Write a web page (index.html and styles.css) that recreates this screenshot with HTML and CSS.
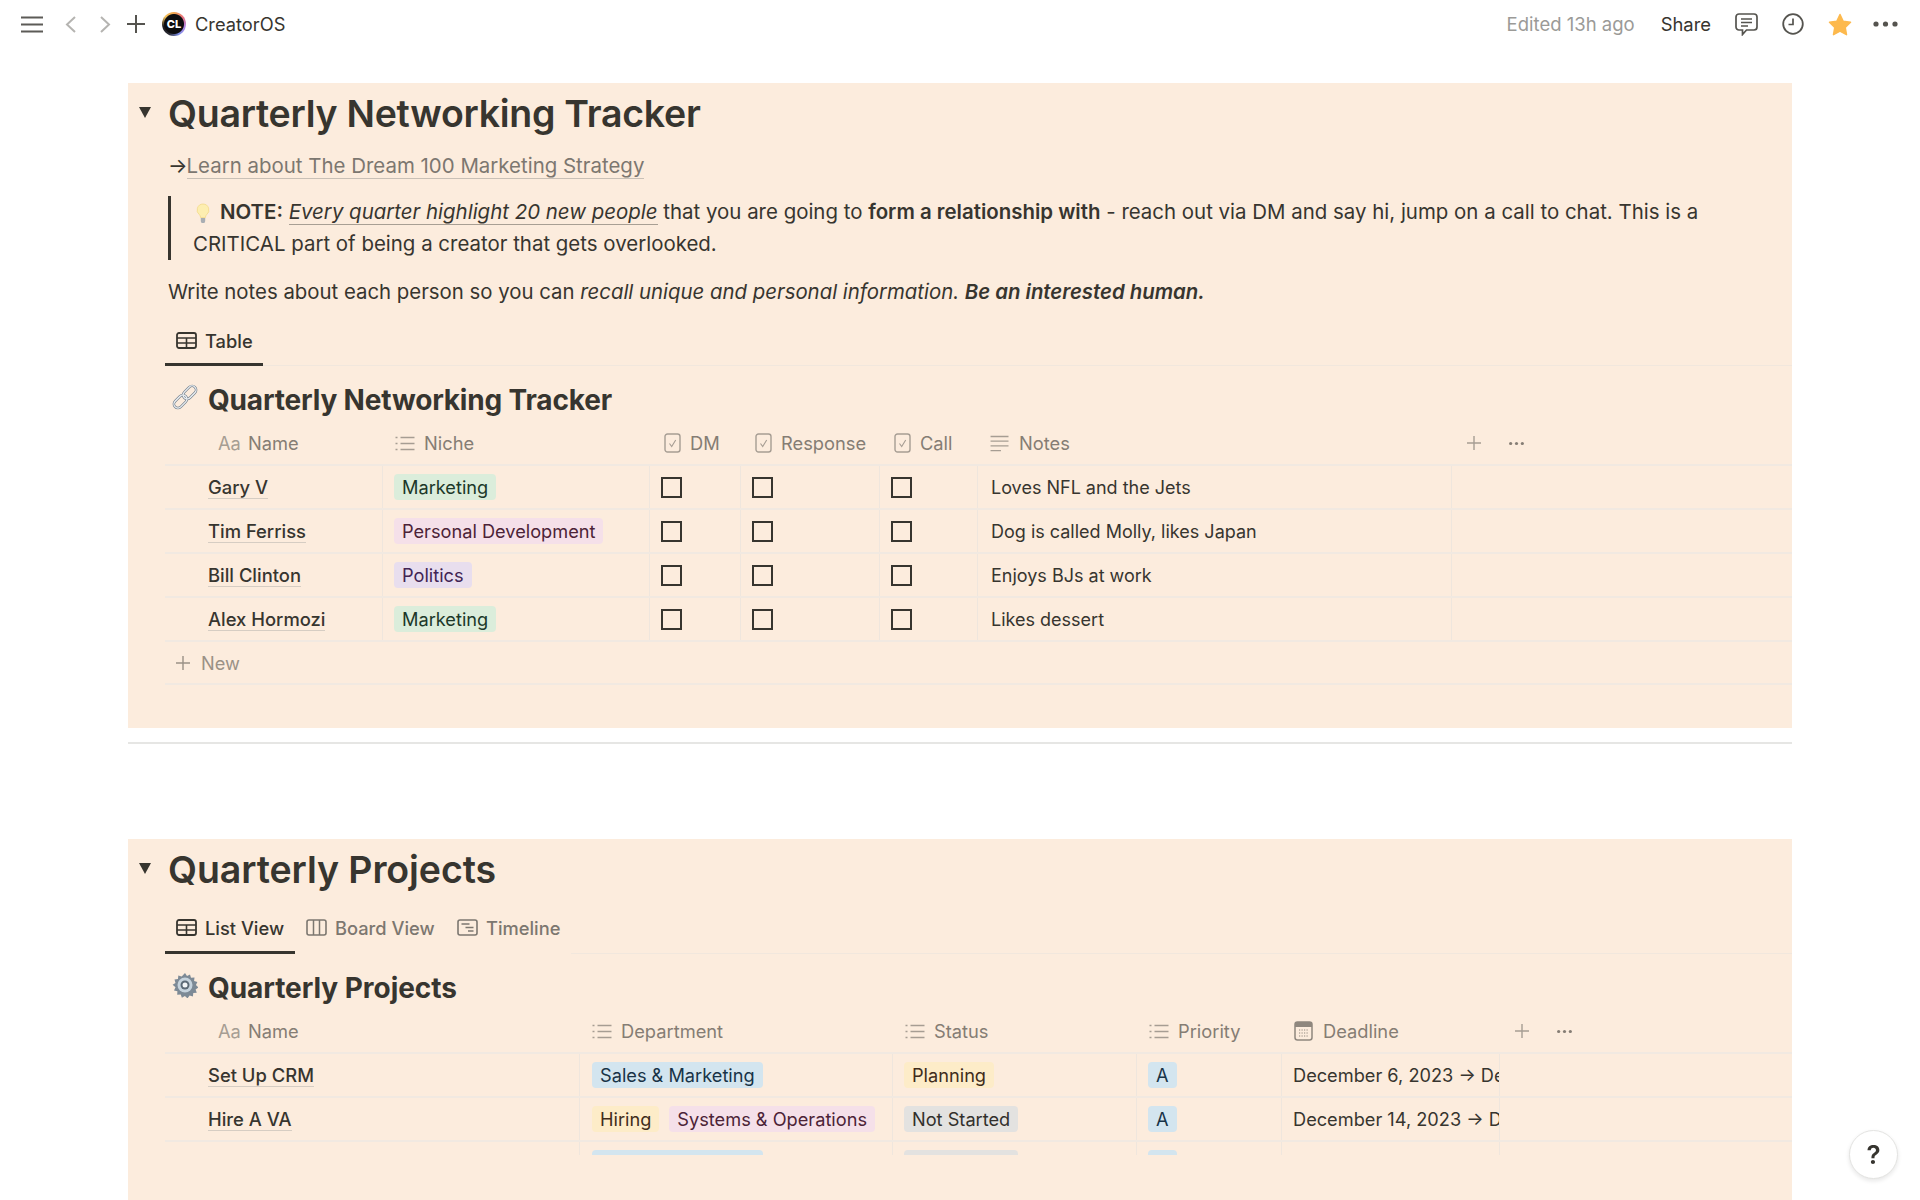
FILE: index.html
```html
<!DOCTYPE html>
<html lang="en">
<head>
<meta charset="utf-8">
<title>CreatorOS</title>
<link rel="stylesheet" href="styles.css">
</head>
<body>
<svg class="defs" width="0" height="0" aria-hidden="true">
  <symbol id="i-table" viewBox="0 0 21 17"><rect x="1" y="1" width="19" height="15" rx="2" fill="none" stroke="currentColor" stroke-width="1.8"/><path d="M1 6h19M1 11h19M10.500 6v10" fill="none" stroke="currentColor" stroke-width="1.6"/></symbol>
  <symbol id="i-board" viewBox="0 0 21 17"><rect x="1" y="1" width="19" height="15" rx="2" fill="none" stroke="currentColor" stroke-width="1.6"/><path d="M7.500 1v15M13.500 1v15" fill="none" stroke="currentColor" stroke-width="1.500"/></symbol>
  <symbol id="i-time" viewBox="0 0 21 17"><rect x="1" y="1" width="19" height="15" rx="2" fill="none" stroke="currentColor" stroke-width="1.6"/><path d="M4.500 5h8M8.500 8.500h8M11 12h5.500" fill="none" stroke="currentColor" stroke-width="1.500"/></symbol>
  <symbol id="i-list" viewBox="0 0 20 17"><path d="M5.500 2.500h14M5.500 8.500h14M5.500 14.500h14" fill="none" stroke="currentColor" stroke-width="1.400"/><path d="M0.500 2.500h2M0.500 8.500h2M0.500 14.500h2" fill="none" stroke="currentColor" stroke-width="1.600"/></symbol>
  <symbol id="i-check" viewBox="0 0 17 20"><rect x="1" y="1" width="15" height="18" rx="2.500" fill="none" stroke="currentColor" stroke-width="1.400"/><path d="M5.500 10.500l2.200 3 4-6.500" fill="none" stroke="currentColor" stroke-width="1.100"/></symbol>
  <symbol id="i-notes" viewBox="0 0 20 18"><path d="M0 1.500h19M0 6.500h19M0 11.500h19M0 16.500h11" fill="none" stroke="currentColor" stroke-width="1.500"/></symbol>
  <symbol id="i-cal" viewBox="0 0 19 20"><rect x="1" y="1" width="17" height="18" rx="2.500" fill="none" stroke="currentColor" stroke-width="1.500"/><path d="M1 3.500a2.500 2.500 0 0 1 2.500-2.500h12a2.500 2.500 0 0 1 2.500 2.500v2.500h-17z" fill="currentColor"/><path d="M5 9h9M5 12h9M5 15h9" fill="none" stroke="currentColor" stroke-width="1.200" stroke-dasharray="1.200 1.300"/></symbol>
  <symbol id="i-plus" viewBox="0 0 16 16"><path d="M8 1v14M1 8h14" fill="none" stroke="currentColor" stroke-width="1.400"/></symbol>
  <symbol id="i-dots" viewBox="0 0 16 4"><circle cx="2.500" cy="2" r="1.500" fill="currentColor"/><circle cx="8" cy="2" r="1.500" fill="currentColor"/><circle cx="13.500" cy="2" r="1.500" fill="currentColor"/></symbol>
</svg>

<header class="topbar">
  <div class="crumbs">
    <svg class="ic-menu" viewBox="0 0 22 17"><path d="M0 1.500h22M0 8.500h22M0 15.500h22" fill="none" stroke="#5c5b57" stroke-width="2"/></svg>
    <svg class="ic-chev" viewBox="0 0 11 17"><path d="M10 1L2 8.500l8 7.500" fill="none" stroke="#b5b4b1" stroke-width="2"/></svg>
    <svg class="ic-chev ic-chev-r" viewBox="0 0 11 17"><path d="M1 1l8 7.500L1 16" fill="none" stroke="#b5b4b1" stroke-width="2"/></svg>
    <svg class="ic-add" viewBox="0 0 18 18"><path d="M9 0v18M0 9h18" fill="none" stroke="#55544f" stroke-width="2"/></svg>
    <span class="logo">CL</span>
    <span class="crumb-title">CreatorOS</span>
  </div>
  <div class="actions">
    <span class="edited">Edited 13h ago</span>
    <span class="share">Share</span>
    <svg class="ic-comment" viewBox="0 0 23 23"><path d="M4 1h15a3 3 0 0 1 3 3v10a3 3 0 0 1-3 3h-7.500l-4 4.500v-4.500H4a3 3 0 0 1-3-3V4a3 3 0 0 1 3-3z" fill="none" stroke="#55544f" stroke-width="1.700"/><path d="M6 6h11M6 9.500h11M6 13h7" fill="none" stroke="#55544f" stroke-width="1.400"/></svg>
    <svg class="ic-clock" viewBox="0 0 22 22"><circle cx="11" cy="11" r="9.800" fill="none" stroke="#55544f" stroke-width="1.800"/><path d="M11 5.500v6H6.500" fill="none" stroke="#55544f" stroke-width="1.700"/></svg>
    <svg class="ic-star" viewBox="0 0 24 23"><path d="M12 1.500l3.200 6.800 7.300 1-5.300 5.100 1.300 7.300L12 18.200l-6.500 3.500 1.300-7.300L1.500 9.300l7.300-1z" fill="#fdb94d" stroke="#fdb94d" stroke-width="1.500" stroke-linejoin="round"/></svg>
    <svg class="ic-more" viewBox="0 0 25 6"><circle cx="3" cy="3" r="2.600" fill="#55544f"/><circle cx="12.500" cy="3" r="2.600" fill="#55544f"/><circle cx="22" cy="3" r="2.600" fill="#55544f"/></svg>
  </div>
</header>

<main class="page">
  <section class="block block-first">
    <div class="heading">
      <span class="toggle"></span>
      <h1>Quarterly Networking Tracker</h1>
    </div>
    <div class="body">
      <p class="line link-line">→<a class="link">Learn about The Dream 100 Marketing Strategy</a></p>
      <blockquote class="quote">
        <svg class="ic-bulb" viewBox="0 0 16 20"><path d="M8 1a6 6 0 0 0-3.500 10.800c.8.700 1 1.500 1 2.700h5c0-1.200.2-2 1-2.700A6 6 0 0 0 8 1z" fill="#fdeeb0" stroke="#f3d98a" stroke-width=".8"/><path d="M5.800 15h4.400v3a2 2 0 0 1-4.400 0z" fill="#a9aeb3"/></svg><strong>NOTE:</strong> <em class="marked">Every quarter highlight 20 new people</em> that you are going to <strong>form a relationship with</strong> - reach out via DM and say hi, jump on a call to chat. This is a CRITICAL part of being a creator that gets overlooked.
      </blockquote>
      <p class="line para">Write notes about each person so you can <em>recall unique and personal information.</em> <strong><em>Be an interested human.</em></strong></p>

      <div class="tabs tabs-first">
        <div class="tab-group">
          <span class="tab tab-on tab-table"><svg class="tab-ic"><use href="#i-table"/></svg>Table</span>
        </div>
        <div class="tab-rule"></div>
      </div>

      <h2 class="db-title">
        <svg class="ic-emoji" viewBox="0 0 26 26"><g transform="rotate(-45 13 13)" fill="none"><rect x="-1" y="9" width="15" height="8" rx="4" stroke="#76828e" stroke-width="2.600"/><rect x="12" y="9" width="15" height="8" rx="4" stroke="#76828e" stroke-width="2.600"/><rect x="-1" y="9" width="15" height="8" rx="4" stroke="#f1f5f8" stroke-width="1.200"/><rect x="12" y="9" width="15" height="8" rx="4" stroke="#f1f5f8" stroke-width="1.200"/></g></svg>
        Quarterly Networking Tracker
      </h2>

      <div class="grid grid-net">
        <div class="row head">
          <div class="hc hc-name"><span class="aa">Aa</span>Name</div>
          <div class="hc"><svg class="hi"><use href="#i-list"/></svg>Niche</div>
          <div class="hc hc-check"><svg class="hi-check"><use href="#i-check"/></svg>DM</div>
          <div class="hc hc-check"><svg class="hi-check"><use href="#i-check"/></svg>Response</div>
          <div class="hc hc-check"><svg class="hi-check"><use href="#i-check"/></svg>Call</div>
          <div class="hc"><svg class="hi"><use href="#i-notes"/></svg>Notes</div>
          <div class="hc hc-tools"><svg class="tool-plus"><use href="#i-plus"/></svg><svg class="tool-dots"><use href="#i-dots"/></svg></div>
        </div>
        <div class="row">
          <div class="c c-name"><span class="nm">Gary V</span></div>
          <div class="c"><span class="tag green">Marketing</span></div>
          <div class="c"><span class="box"></span></div>
          <div class="c"><span class="box"></span></div>
          <div class="c"><span class="box"></span></div>
          <div class="c c-text">Loves NFL and the Jets</div>
          <div class="c c-last"></div>
        </div>
        <div class="row">
          <div class="c c-name"><span class="nm">Tim Ferriss</span></div>
          <div class="c"><span class="tag pink">Personal Development</span></div>
          <div class="c"><span class="box"></span></div>
          <div class="c"><span class="box"></span></div>
          <div class="c"><span class="box"></span></div>
          <div class="c c-text">Dog is called Molly, likes Japan</div>
          <div class="c c-last"></div>
        </div>
        <div class="row">
          <div class="c c-name"><span class="nm">Bill Clinton</span></div>
          <div class="c"><span class="tag purple">Politics</span></div>
          <div class="c"><span class="box"></span></div>
          <div class="c"><span class="box"></span></div>
          <div class="c"><span class="box"></span></div>
          <div class="c c-text">Enjoys BJs at work</div>
          <div class="c c-last"></div>
        </div>
        <div class="row">
          <div class="c c-name"><span class="nm">Alex Hormozi</span></div>
          <div class="c"><span class="tag green">Marketing</span></div>
          <div class="c"><span class="box"></span></div>
          <div class="c"><span class="box"></span></div>
          <div class="c"><span class="box"></span></div>
          <div class="c c-text">Likes dessert</div>
          <div class="c c-last"></div>
        </div>
        <div class="new-row"><svg class="new-plus"><use href="#i-plus"/></svg>New</div>
      </div>
    </div>
  </section>

  <hr class="divider">

  <section class="block block-second">
    <div class="heading">
      <span class="toggle"></span>
      <h1>Quarterly Projects</h1>
    </div>
    <div class="body">
      <div class="tabs tabs-second">
        <div class="tab-group">
          <span class="tab tab-on tab-list"><svg class="tab-ic"><use href="#i-table"/></svg>List View</span>
          <span class="tab tab-board"><svg class="tab-ic"><use href="#i-board"/></svg>Board View</span>
          <span class="tab tab-timeline"><svg class="tab-ic"><use href="#i-time"/></svg>Timeline</span>
        </div>
        <div class="tab-rule"></div>
      </div>

      <h2 class="db-title db-title-second">
        <svg class="ic-emoji" viewBox="0 0 26 26"><path d="M13 1l2 3 3-1.500 1 3.300 3.500-.2-.4 3.500 3.300 1-1.500 3 2.500 2.400-2.800 2 1.200 3.300-3.500.3-.4 3.500-3.300-1.100-2.100 2.900-2.600-2.500-3 1.800-1.200-3.300-3.500.4.200-3.500-3.400-.9 1.500-3.200L.6 12.800l2.900-1.900-1-3.400 3.500-.4.300-3.500 3.400.9z" fill="#7d8a96"/><circle cx="13" cy="13" r="7.500" fill="#c6d3dd"/><circle cx="13" cy="13" r="4.500" fill="#5c6a76"/><circle cx="13" cy="13" r="2.500" fill="#f2f5f7"/></svg>
        Quarterly Projects
      </h2>

      <div class="grid grid-proj">
        <div class="row head">
          <div class="hc hc-name"><span class="aa">Aa</span>Name</div>
          <div class="hc"><svg class="hi"><use href="#i-list"/></svg>Department</div>
          <div class="hc"><svg class="hi"><use href="#i-list"/></svg>Status</div>
          <div class="hc"><svg class="hi"><use href="#i-list"/></svg>Priority</div>
          <div class="hc"><svg class="hi-cal"><use href="#i-cal"/></svg>Deadline</div>
          <div class="hc hc-tools"><svg class="tool-plus"><use href="#i-plus"/></svg><svg class="tool-dots"><use href="#i-dots"/></svg></div>
        </div>
        <div class="row">
          <div class="c c-name"><span class="nm">Set Up CRM</span></div>
          <div class="c c-dept"><span class="tag blue">Sales &amp; Marketing</span></div>
          <div class="c"><span class="tag yellow">Planning</span></div>
          <div class="c"><span class="tag blue">A</span></div>
          <div class="c c-date">December 6, 2023 → December 31, 2023</div>
          <div class="c c-last"></div>
        </div>
        <div class="row">
          <div class="c c-name"><span class="nm">Hire A VA</span></div>
          <div class="c c-dept"><span class="tag yellow">Hiring</span><span class="tag pink">Systems &amp; Operations</span></div>
          <div class="c"><span class="tag gray">Not Started</span></div>
          <div class="c"><span class="tag blue">A</span></div>
          <div class="c c-date">December 14, 2023 → December 31, 2023</div>
          <div class="c c-last"></div>
        </div>
        <div class="row">
          <div class="c c-name"></div>
          <div class="c c-dept"><span class="tag blue">Sales &amp; Marketing</span></div>
          <div class="c"><span class="tag gray">Not Started</span></div>
          <div class="c"><span class="tag blue">A</span></div>
          <div class="c c-date"></div>
          <div class="c c-last"></div>
        </div>
      </div>
    </div>
  </section>
</main>

<button class="help" type="button">?</button>
</body>
</html>
```

FILE: styles.css
```css
* { box-sizing: border-box; }
html, body { margin: 0; height: 1200px; overflow: hidden; background: #fff; }
body { font-family: Inter, "Liberation Sans", sans-serif; color: #37352f; font-size: 20.45px; }
.defs { position: absolute; }

.topbar { height: 48px; display: flex; justify-content: space-between; align-items: center; padding: 0 22px 0 21px; }
.crumbs, .actions { display: flex; align-items: center; }
.ic-menu { width: 22px; height: 17px; }
.ic-chev { width: 11px; height: 17px; margin-left: 22px; }
.ic-chev-r { margin-left: 24px; }
.ic-add { width: 18px; height: 18px; margin-left: 16px; }
.logo { width: 24px; height: 24px; margin-left: 17px; border-radius: 50%; background: radial-gradient(circle, #0d0d0f 0 9.5px, transparent 10.5px), conic-gradient(#f0a64f, #e8707c, #b486e0, #7c8fe8, #2b2b33, #1c1c22, #f0c05a, #f0a64f); color: #fff; font-size: 11px; font-weight: 800; line-height: 24px; text-align: center; }
.crumb-title { margin-left: 9px; font-size: 18.3px; }
.edited { font-size: 18.5px; color: #9b9a97; }
.share { font-size: 18.4px; margin-left: 26px; }
.ic-comment { width: 23px; height: 23px; margin-left: 24px; }
.ic-clock { width: 22px; height: 22px; margin-left: 24px; }
.ic-star { width: 24px; height: 23px; margin-left: 24px; }
.ic-more { width: 25px; height: 6px; margin-left: 21px; }

.page { margin: 0 128px; padding-top: 35px; }
.block { background: #fcecdd; padding-left: 11px; }
.block-first { height: 645px; }
.block-second { height: 400px; margin-top: 95px; }
.divider { height: 2px; margin: 14px 0 0; border: 0; background: #e6e6e4; }

.heading { display: flex; align-items: center; height: 60px; padding-top: 1px; }
.toggle { width: 0; height: 0; border-left: 6.5px solid transparent; border-right: 6.5px solid transparent; border-top: 11px solid #37352f; margin-right: 17px; margin-top: -3px; }
h1 { margin: 0; font-size: 37.5px; line-height: 60px; font-weight: 600; letter-spacing: -0.27px; }
.block-second h1 { letter-spacing: -0.09px; }

.body { margin-left: 26px; }
.line { margin: 0 0 0 3px; line-height: 32px; }
.link-line { padding-top: 7px; height: 39px; color: #37352f; }
.link { margin-left: -1px; color: #7c7770; border-bottom: 1px solid #c9c0b6; }
.quote { margin: 14px 0 0 3px; width: 1560px; border-left: 3px solid #37352f; padding-left: 22px; line-height: 32px; }
.ic-bulb { width: 16px; height: 20px; margin: 0 9px 0 2px; vertical-align: -4px; }
.marked { border-bottom: 1.5px solid #a89f94; }
.para { margin-top: 16px; font-size: 20.38px; }
strong { font-weight: 600; }

.tabs { display: flex; height: 48px; margin-top: 10px; }
.tabs-second { height: 55px; margin-top: 0; }
.tabs-second .tab { padding-top: 5px; }
.tab-group { display: flex; align-items: stretch; }
.tab { display: flex; align-items: center; font-size: 18.3px; color: #7c7770; font-weight: 500; border-bottom: 3px solid transparent; }
.tab-on { color: #37352f; border-bottom-color: #37352f; }
.tab-table { width: 98px; padding-left: 11px; }
.tab-list { width: 130px; padding-left: 11px; }
.tab-board { width: 151px; padding-left: 11px; }
.tab-timeline { width: 125px; padding-left: 11px; }
.tab-ic { width: 21px; height: 17px; margin-right: 8px; }
.tab-rule { flex: 1; border-bottom: 1.5px solid #f1e7dd; }

.db-title { display: flex; align-items: center; height: 56px; margin: 0; padding: 12px 0 0 7px; font-size: 28px; font-weight: 700; letter-spacing: -0.17px; gap: 10px; }
.db-title-second { padding-top: 11px; letter-spacing: -0.05px; }
.ic-emoji { width: 26px; height: 26px; margin-top: -6px; }

.grid { font-size: 18.2px; }
.grid-net .row { display: grid; grid-template-columns: 218px 267px 91px 139px 98px 474px 1fr; }
.grid-proj { height: 145px; overflow: hidden; }
.grid-proj .row { display: grid; grid-template-columns: 415px 313px 244px 145px 218px 1fr; }
.row { height: 44px; border-bottom: 2px solid #f1e9e1; }
.row.head { color: #857d74; font-size: 18.3px; }

.hc { display: flex; align-items: center; padding-left: 12px; min-width: 0; }
.hc-name { padding-left: 53px; }
.hc-check { padding-left: 14px; }
.aa { margin-right: 7px; color: #a69d93; }
.hi { width: 20px; height: 17px; margin-right: 9px; color: #a69d93; flex: none; }
.hi-check { width: 17px; height: 20px; margin-right: 9px; color: #a69d93; flex: none; }
.hi-cal { width: 19px; height: 20px; margin-right: 10px; color: #8f877e; flex: none; }
.hc-tools { padding-left: 14px; gap: 26px; }
.tool-plus { width: 16px; height: 16px; color: #a69d93; }
.tool-dots { width: 17px; height: 5px; color: #857d74; }

.c { display: flex; align-items: center; gap: 10px; padding-left: 11px; border-right: 1px solid #efe6dd; white-space: nowrap; overflow: hidden; min-width: 0; }
.c-name { padding-left: 43px; font-weight: 500; font-size: 18.4px; }
.c-text { padding-left: 13px; font-size: 18px; }
.c-dept { padding-left: 12px; }
.c-date { font-size: 18.2px; }
.c-last { border-right: 0; }
.nm { border-bottom: 1px solid #d6cdc3; line-height: 22px; }
.tag { display: inline-flex; align-items: center; height: 26px; padding: 0 8px; border-radius: 4px; flex: none; }
.green { background: #dbeddb; color: #1c3829; }
.pink { background: #f5e0e9; color: #4c2337; }
.purple { background: #e8deee; color: #412454; }
.blue { background: #d3e5ef; color: #183347; }
.yellow { background: #fdecc8; color: #402c1b; }
.gray { background: #e3e2e0; color: #32302c; }
.box { width: 21px; height: 21px; border: 2px solid #37352f; flex: none; }

.new-row { display: flex; align-items: center; height: 43px; padding-left: 10px; color: #9a9186; border-bottom: 2px solid #f1e9e1; }
.new-plus { width: 16px; height: 16px; margin-right: 10px; }

.help { position: fixed; right: 22px; bottom: 21px; width: 49px; height: 49px; border-radius: 50%; border: 1px solid #e3e3e1; background: #fff; color: #37352f; font: 600 26px Inter, sans-serif; box-shadow: 0 2px 4px rgba(15,15,15,.1); padding: 0; }
```
